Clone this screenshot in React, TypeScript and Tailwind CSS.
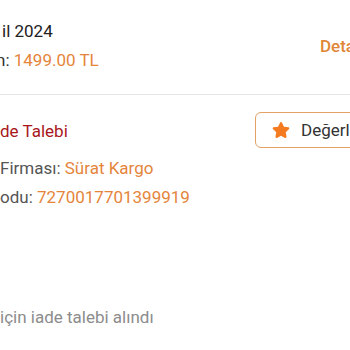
import { FaStar } from 'react-icons/fa';

export default function App() {
  return (
    <div className="w-[350px] h-[350px] overflow-hidden bg-white font-['Roboto',sans-serif] text-[17px] leading-[24px]">
      <div className="w-[420px]">
        <div className="flex items-center pt-[19px] pb-[22px] border-b border-[#e6e6e6]">
          <div className="w-[320px] shrink-0 flex flex-col gap-[5px]">
            <p className="pl-[2px] text-[#222]">il 2024</p>
            <p className="-ml-[4px] text-[#333]">
              n: <span className="text-[#e5853b]">1499.00 TL</span>
            </p>
          </div>
          <span className="text-[#e08638] font-medium">Detaylar</span>
        </div>

        <div className="flex items-start pt-[17px]">
          <div className="w-[255px] shrink-0">
            <p className="mt-[7px] text-[#a8161c]">de Talebi</p>
          </div>
          <button className="h-[36px] flex items-center gap-[11px] pl-[16px] pr-4 border border-[#e2a064] rounded-md text-[#333]">
            <FaStar className="text-[#f47b20] w-[18px] h-[18px]" />
            <span>Değerlendir</span>
          </button>
        </div>

        <div className="flex flex-col gap-[5px] mt-[8px]">
          <p className="text-[#555]">
            Firması: <span className="text-[#e5853b]">Sürat Kargo</span>
          </p>
          <p className="text-[#555]">
            odu: <span className="text-[#e5853b]">7270017701399919</span>
          </p>
        </div>

        <p className="mt-[96px] text-[#8c8c8c]">için iade talebi alındı</p>
      </div>
    </div>
  );
}
